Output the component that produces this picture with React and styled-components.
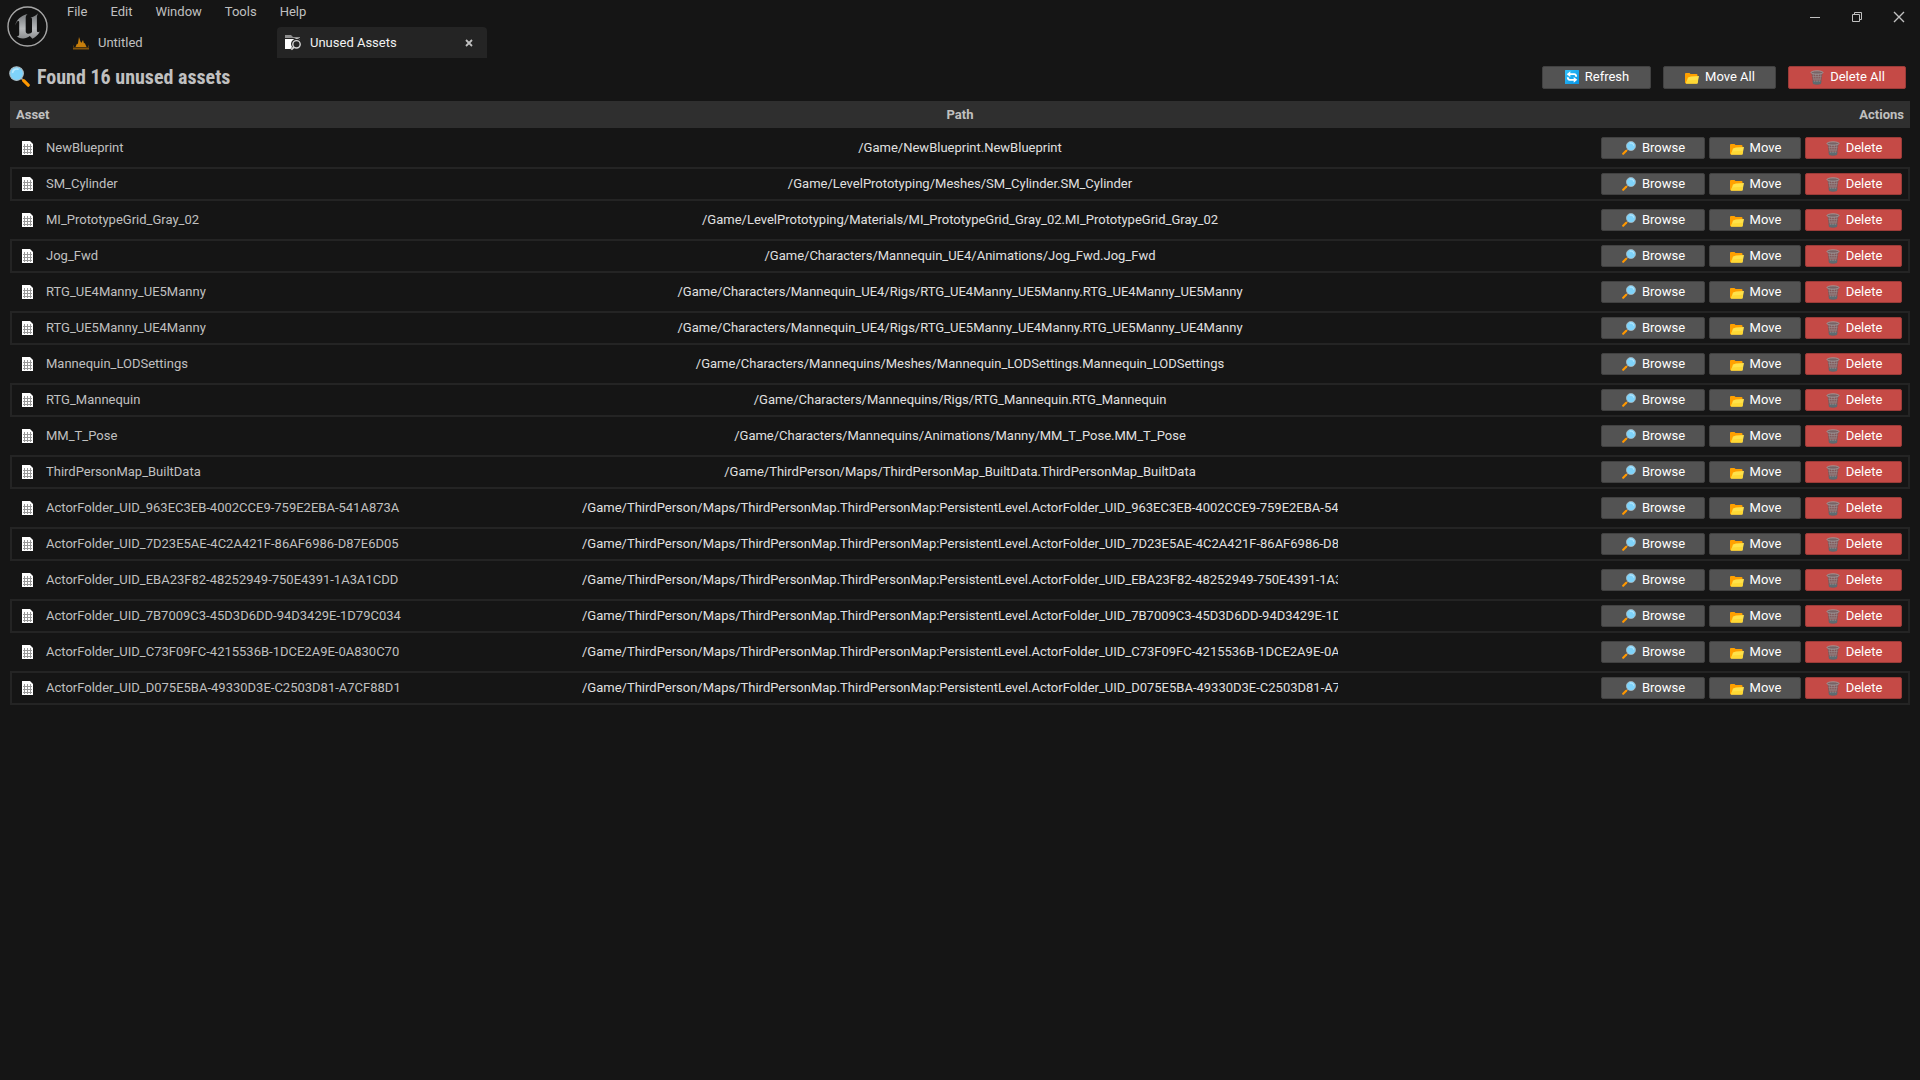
import React from "react";
import styled, { createGlobalStyle, css } from "styled-components";

const Global = createGlobalStyle`
  * { box-sizing: border-box; }
  body { margin: 0; background: #151515; color: #c0c0c0; font: 13px/16px Roboto, "Liberation Sans", sans-serif; }
  button { font: inherit; }
`;

const Page = styled.div`
  min-height: 100vh;
  background: #151515;
`;
const TitleBar = styled.header`
  display: flex;
  height: 58px;
`;
const LogoBox = styled.div`
  width: 60px;
  padding: 6px 0 0 7px;
`;
const BarMain = styled.div`
  flex: 1;
  min-width: 0;
`;
const Menu = styled.nav`
  display: flex;
  height: 27px;
  padding: 4px 0 0 7px;
  gap: 23px;
`;
const MenuButton = styled.button`
  height: 16px;
  padding: 0;
  border: 0;
  background: none;
  color: #c0c0c0;
`;
const Tabs = styled.div`
  display: flex;
  height: 31px;
`;
const Tab = styled.div`
  display: flex;
  align-items: center;
  width: ${(p) => (p.$active ? 210 : 217)}px;
  padding: 0 12px 0 ${(p) => (p.$active ? 8 : 13)}px;
  border-radius: 4px 4px 0 0;
  background: ${(p) => (p.$active ? "#242424" : "transparent")};
`;
const TabLabel = styled.button`
  display: flex;
  align-items: center;
  gap: 9px;
  flex: 1;
  padding: 0;
  border: 0;
  background: none;
  color: ${(p) => (p.$active ? "#f2f2f2" : "#c0c0c0")};
`;
const IconButton = styled.button`
  display: grid;
  place-items: center;
  width: ${(p) => p.$w}px;
  height: ${(p) => p.$h}px;
  padding: 0;
  border: 0;
  background: none;
`;
const WindowButtons = styled.div`
  display: flex;
  height: 34px;
`;
const Content = styled.main`
  padding: 0 10px;
`;
const Summary = styled.section`
  display: flex;
  align-items: center;
  gap: 12px;
  height: 43px;
  padding: 0 4px 4px 0;
`;
const Title = styled.h1`
  display: flex;
  align-items: center;
  gap: 7px;
  flex: 1;
  margin: 0 0 2px -1px;
  font: bold 20px/24px "Roboto Condensed", Roboto, sans-serif;
`;
const widths = { browse: 104, move: 92, remove: 97, refresh: 109, moveAll: 113, removeAll: 118 };
const ActionButton = styled.button`
  display: flex;
  align-items: center;
  justify-content: center;
  gap: 6px;
  width: ${(p) => widths[p.$kind]}px;
  height: ${(p) => (p.$tall ? 23 : 22)}px;
  padding: 0 0 ${(p) => (p.$tall ? 1 : 0)}px 1px;
  border: 1px solid ${(p) => (p.$danger ? "#9c3b38" : "#414141")};
  border-radius: 2px;
  background: ${(p) => (p.$danger ? "#c54a46" : "#535353")};
  color: #ffffff;
`;
const Table = styled.table`
  display: block;
`;
const columns = css`
  display: grid;
  grid-template-columns: 3fr 4fr 3fr;
  align-items: center;
`;
const HeadRow = styled.tr`
  ${columns}
  height: 27px;
  padding: 0 6px;
  background: #2f2f2f;
`;
const Head = styled.th`
  padding: 0;
  text-align: ${(p) => p.$align};
`;
const THead = styled.thead`
  display: block;
`;
const Body = styled.tbody`
  display: flex;
  flex-direction: column;
  gap: 2px;
  padding-top: 3px;
`;
const Row = styled.tr`
  ${columns}
  padding: 4px 3px;
  border: 2px solid ${(p) => (p.$outlined ? "#242424" : "#151515")};
`;
const NameCell = styled.td`
  display: flex;
  align-items: center;
  gap: 13px;
  padding: 0 0 0 7px;
`;
const PathCell = styled.td`
  overflow: hidden;
  padding: 0;
  color: #e0e0e0;
  text-align: center;
  white-space: nowrap;
`;
const ActionsCell = styled.td`
  display: flex;
  justify-content: flex-end;
  gap: 4px;
  padding: 0 3px 0 0;
`;

const Logo = () => (
  <svg width="42" height="42" viewBox="0 0 42 42" aria-hidden="true">
    <defs>
      <linearGradient id="steel" x1="0" y1="0" x2="0" y2="1">
        <stop offset="0" stopColor="#74777a" />
        <stop offset="0.600" stopColor="#b8babc" />
        <stop offset="1" stopColor="#8a8c8e" />
      </linearGradient>
    </defs>
    <circle cx="20.500" cy="20.500" r="19.500" fill="#121212" stroke="#a6a6a6" strokeWidth="1.400" />
    <path
      d="M8.300 19.500C9.500 13.500 13.500 10 20.500 8c-1.300 1.300-1.800 2.300-1.800 4v13.200c0 1.900 1.500 2.600 3 2.600 1.400 0 2.600-.7 3.300-1.700V13.200c0-1.100-.6-1.500-1.700-1.400 3.300-.8 5.700-2.300 7.900-4.500-1 1.700-1.300 2.900-1.300 4.500v12.700c0 1.200.4 1.700 1.200 1.700.5 0 1-.2 1.700-.6-1.500 3.100-3.800 5.300-7.300 7.200l-2.700-2.700c-1.900 1.600-4.200 2.400-6.800 2.400-3.100 0-5.200-1-6.300-2.200 1.500 0 2.500-.5 2.500-2V16.500c0-1.200-.4-1.600-1-1.600-1 0-2.100 1.700-2.900 4.600z"
      fill="url(#steel)"
    />
  </svg>
);
const LevelIcon = () => (
  <svg width="16" height="16" viewBox="0 0 16 16" aria-hidden="true">
    <path d="M2.500 12 4 8.500l.8.700L6 2l1.700 5 .8.800L10 5l1 3.500.8-.5 1.700 4z" fill="#c87f0c" />
    <path d="M0 12.500h16v2H0z" fill="#83540c" />
    <path d="M0 9.500l1.200 2.500H0zM16 9.500 14.800 12H16z" fill="#5f400f" />
  </svg>
);
const SearchFolderIcon = () => (
  <svg width="16" height="17" viewBox="0 0 16 17" aria-hidden="true">
    <path d="M0 1h6l2 2h7v1H0z" fill="#8e8e8e" />
    <path d="M0 5h15v.500a5.600 5.600 0 0 0-8 7.500l-1.500 2H0z" fill="#fff" />
    <circle cx="11.500" cy="10.300" r="3.700" fill="none" stroke="#d4d4d4" strokeWidth="1.400" />
    <path d="m9 13-2.700 2.700" stroke="#d4d4d4" strokeWidth="1.800" />
  </svg>
);
const Magnifier = ({ size, flip }) => (
  <svg width={size} height={size} viewBox="0 0 20 20" aria-hidden="true">
    <g transform={flip ? "matrix(-1 0 0 1 20 0)" : undefined}>
      <path d="m11.500 11.500 3 3" stroke="#8a8a8a" strokeWidth="1.600" />
      <path d="m14 14 4.300 4.300" stroke="#ff9800" strokeWidth="3" strokeLinecap="round" />
      <circle cx="7.200" cy="7.200" r="6.500" fill="#7fd3fa" stroke="#aebdc4" strokeWidth="1" />
      <path d="M3.500 6a4 4 0 0 1 5-3" stroke="#b9e9ff" strokeWidth="1.600" fill="none" strokeLinecap="round" />
    </g>
  </svg>
);
const RefreshIcon = () => (
  <svg width="14" height="14" viewBox="0 0 14 14" aria-hidden="true">
    <defs>
      <linearGradient id="sky" x1="0" y1="0" x2="1" y2="1">
        <stop offset="0" stopColor="#35c2fb" />
        <stop offset="1" stopColor="#0492e4" />
      </linearGradient>
    </defs>
    <rect width="14" height="14" rx=".500" fill="url(#sky)" />
    <path d="M4.500 4.200h4.700q2 0 2 2.600M9.500 9.800H4.800q-2 0-2-2.600" stroke="#fff" strokeWidth="1.800" fill="none" />
    <path d="M5.300 1.300v5.800L1.700 4.200zM8.700 6.900v5.800l3.600-2.900z" fill="#fff" />
  </svg>
);
const FolderIcon = () => (
  <svg width="14" height="15" viewBox="0 0 14 15" aria-hidden="true">
    <path d="M0 4q0-1 1-1h3.500l1 1h6q1 0 1 1v7l-1 1.500H1q-1 0-1-1z" fill="#ffa000" />
    <path d="M3 7.500 6 6.500 14 6l-1.500 7.500H1z" fill="#ffe24a" />
    <path d="M1 13.500 2 10.500l11-.8-.7 3.800z" fill="#fdd835" />
  </svg>
);
const TrashIcon = () => (
  <svg width="14" height="15" viewBox="0 0 14 15" aria-hidden="true">
    <path d="M1.500 3h11l-1.500 11q-4 1.500-8 0z" fill="#80585a" />
    <path d="M2.700 11h8.600L11 13.800q-4 1.500-8 0z" fill="#5e6b70" />
    <path d="m3 4 1.500 8M5.500 4l.8 8M8.500 4l-.8 8M11 4l-1.500 8M2.500 6.500h9M3 9h8" stroke="#98898a" strokeWidth=".7" />
    <ellipse cx="7" cy="2.500" rx="6" ry="1.700" fill="#786365" stroke="#a39c9d" strokeWidth=".9" />
  </svg>
);
const AssetIcon = () => (
  <svg width="11" height="14" viewBox="0 0 11 14" aria-hidden="true">
    <path d="M0 0h8l3 3v11H0z" fill="#fff" />
    <path d="M1 5.500h9M1 8.500h9M1 11.500h9M2.500 3v10M5.500 3v10M8.500 3v10" stroke="#999" />
  </svg>
);

const assets = [
  ["NewBlueprint", "/Game/NewBlueprint.NewBlueprint"],
  ["SM_Cylinder", "/Game/LevelPrototyping/Meshes/SM_Cylinder.SM_Cylinder"],
  ["MI_PrototypeGrid_Gray_02", "/Game/LevelPrototyping/Materials/MI_PrototypeGrid_Gray_02.MI_PrototypeGrid_Gray_02"],
  ["Jog_Fwd", "/Game/Characters/Mannequin_UE4/Animations/Jog_Fwd.Jog_Fwd"],
  ["RTG_UE4Manny_UE5Manny", "/Game/Characters/Mannequin_UE4/Rigs/RTG_UE4Manny_UE5Manny.RTG_UE4Manny_UE5Manny"],
  ["RTG_UE5Manny_UE4Manny", "/Game/Characters/Mannequin_UE4/Rigs/RTG_UE5Manny_UE4Manny.RTG_UE5Manny_UE4Manny"],
  ["Mannequin_LODSettings", "/Game/Characters/Mannequins/Meshes/Mannequin_LODSettings.Mannequin_LODSettings"],
  ["RTG_Mannequin", "/Game/Characters/Mannequins/Rigs/RTG_Mannequin.RTG_Mannequin"],
  ["MM_T_Pose", "/Game/Characters/Mannequins/Animations/Manny/MM_T_Pose.MM_T_Pose"],
  ["ThirdPersonMap_BuiltData", "/Game/ThirdPerson/Maps/ThirdPersonMap_BuiltData.ThirdPersonMap_BuiltData"],
  ...[
    "963EC3EB-4002CCE9-759E2EBA-541A873A",
    "7D23E5AE-4C2A421F-86AF6986-D87E6D05",
    "EBA23F82-48252949-750E4391-1A3A1CDD",
    "7B7009C3-45D3D6DD-94D3429E-1D79C034",
    "C73F09FC-4215536B-1DCE2A9E-0A830C70",
    "D075E5BA-49330D3E-C2503D81-A7CF88D1",
  ].map((id) => [
    `ActorFolder_UID_${id}`,
    `/Game/ThirdPerson/Maps/ThirdPersonMap.ThirdPersonMap:PersistentLevel.ActorFolder_UID_${id}`,
  ]),
];

export default function App() {
  return (
    <Page>
      <Global />
      <TitleBar>
        <LogoBox><Logo /></LogoBox>
        <BarMain>
          <Menu>
            {["File", "Edit", "Window", "Tools", "Help"].map((m) => <MenuButton key={m}>{m}</MenuButton>)}
          </Menu>
          <Tabs>
            <Tab><TabLabel><LevelIcon />Untitled</TabLabel></Tab>
            <Tab $active>
              <TabLabel $active><SearchFolderIcon />Unused Assets</TabLabel>
              <IconButton $w={12} $h={16} aria-label="Close tab">
                <svg width="8" height="8" viewBox="0 0 8 8"><path d="m1 1 6 6M7 1 1 7" stroke="#c0c0c0" strokeWidth="1.800" /></svg>
              </IconButton>
            </Tab>
          </Tabs>
        </BarMain>
        <WindowButtons>
          <IconButton $w={42} $h={34} aria-label="Minimize">
            <svg width="12" height="12" viewBox="0 0 12 12"><path d="M1 6.500h10" stroke="#c0c0c0" /></svg>
          </IconButton>
          <IconButton $w={42} $h={34} aria-label="Restore">
            <svg width="12" height="12" viewBox="0 0 12 12" fill="none" stroke="#c0c0c0"><path d="M1.500 3.500h7v7h-7zM3.500 3V1.500h7v7H9" /></svg>
          </IconButton>
          <IconButton $w={42} $h={34} aria-label="Close">
            <svg width="12" height="12" viewBox="0 0 12 12"><path d="m1 1 10 10M11 1 1 11" stroke="#c0c0c0" strokeWidth="1.400" /></svg>
          </IconButton>
        </WindowButtons>
      </TitleBar>
      <Content>
        <Summary>
          <Title><Magnifier size={21} />Found 16 unused assets</Title>
          <ActionButton $kind="refresh" $tall><RefreshIcon />Refresh</ActionButton>
          <ActionButton $kind="moveAll" $tall><FolderIcon />Move All</ActionButton>
          <ActionButton $kind="removeAll" $tall $danger><TrashIcon />Delete All</ActionButton>
        </Summary>
        <Table>
          <THead>
            <HeadRow>
              <Head $align="left">Asset</Head>
              <Head $align="center">Path</Head>
              <Head $align="right">Actions</Head>
            </HeadRow>
          </THead>
          <Body>
            {assets.map(([name, path], i) => (
              <Row key={name} $outlined={i % 2 === 1}>
                <NameCell><AssetIcon />{name}</NameCell>
                <PathCell>{path}</PathCell>
                <ActionsCell>
                  <ActionButton $kind="browse"><Magnifier size={14} flip />Browse</ActionButton>
                  <ActionButton $kind="move"><FolderIcon />Move</ActionButton>
                  <ActionButton $kind="remove" $danger><TrashIcon />Delete</ActionButton>
                </ActionsCell>
              </Row>
            ))}
          </Body>
        </Table>
      </Content>
    </Page>
  );
}
